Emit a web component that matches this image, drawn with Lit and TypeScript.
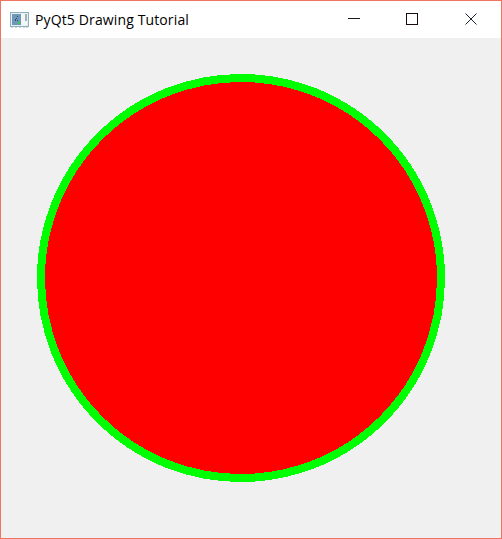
import { LitElement, html, css } from "lit";
import { customElement } from "lit/decorators.js";

@customElement("app-root")
export class AppRoot extends LitElement {
  static styles = css`
    :host { display: block; width: 502px; height: 539px; }
    .window {
      box-sizing: border-box; width: 502px; height: 539px;
      border: 1px solid #f2745f; background: #f0f0f0;
      display: flex; flex-direction: column;
    }
    .titlebar {
      height: 37px; flex: none; background: #fff;
      display: flex; align-items: center;
    }
    .app-icon { width: 19px; height: 16px; margin-left: 9px; flex: none; display: block; }
    .title {
      margin-left: 6px; flex: 1; white-space: nowrap;
      font: 14px/18px "Open Sans", "Noto Sans", sans-serif; letter-spacing: 0.13px; color: #000;
    }
    .controls { display: grid; grid-template-columns: 58px 59px 59px; height: 100%; }
    .btn { display: flex; align-items: center; justify-content: center; }
    .btn svg { width: 13px; height: 13px; display: block; }
    .canvas { flex: 1; min-height: 0; display: block; }
    .canvas svg { display: block; width: 500px; height: 500px; }
  `;

  render() {
    return html`
      <div class="window">
        <div class="titlebar">
          <svg class="app-icon" viewBox="0 0 19 16" shape-rendering="crispEdges">
            <rect x="0" y="0" width="19" height="15" fill="#8fb0bd"/>
            <rect x="1" y="1" width="17" height="13" fill="#e8eff2"/>
            <rect x="2" y="2" width="9" height="11" fill="#6f97b5"/>
            <rect x="11" y="2" width="6" height="11" fill="#f4f6f4"/>
            <rect x="15" y="2" width="2" height="7" fill="#9db4c0"/>
            <path d="M7 4h1v1H7zM6 6h1v1H6zM5 7h1v2H5zM7 8h1v1H7z" fill="#1f4f86"/>
            <rect x="8" y="10" width="2" height="2" fill="#2fd04a"/>
            <path d="M1 15h2v1H1zM5 15h2v1H5zM9 15h2v1H9zM13 15h2v1h-2zM16 15h2v1h-2z" fill="#c9d4d8"/>
          </svg>
          <span class="title">PyQt5 Drawing Tutorial</span>
          <div class="controls">
            <div class="btn">
              <svg viewBox="0 0 13 13" shape-rendering="crispEdges"><rect x="0" y="5" width="12" height="1" fill="#1a1a1a"/></svg>
            </div>
            <div class="btn">
              <svg viewBox="0 0 13 13" fill="none" shape-rendering="crispEdges"><rect x="0.5" y="0.5" width="11" height="11" stroke="#1a0a14"/></svg>
            </div>
            <div class="btn">
              <svg viewBox="0 0 13 13" fill="none"><path d="M0.5 0.5 11.5 11.5M11.5 0.5 0.5 11.5" stroke="#1a2030" stroke-width="1"/></svg>
            </div>
          </div>
        </div>
        <div class="canvas">
          <svg viewBox="0 0 500 500" shape-rendering="crispEdges">
            <circle cx="240" cy="240" r="200" fill="#ff0000" stroke="#00ff00" stroke-width="8"/>
          </svg>
        </div>
      </div>
    `;
  }
}
